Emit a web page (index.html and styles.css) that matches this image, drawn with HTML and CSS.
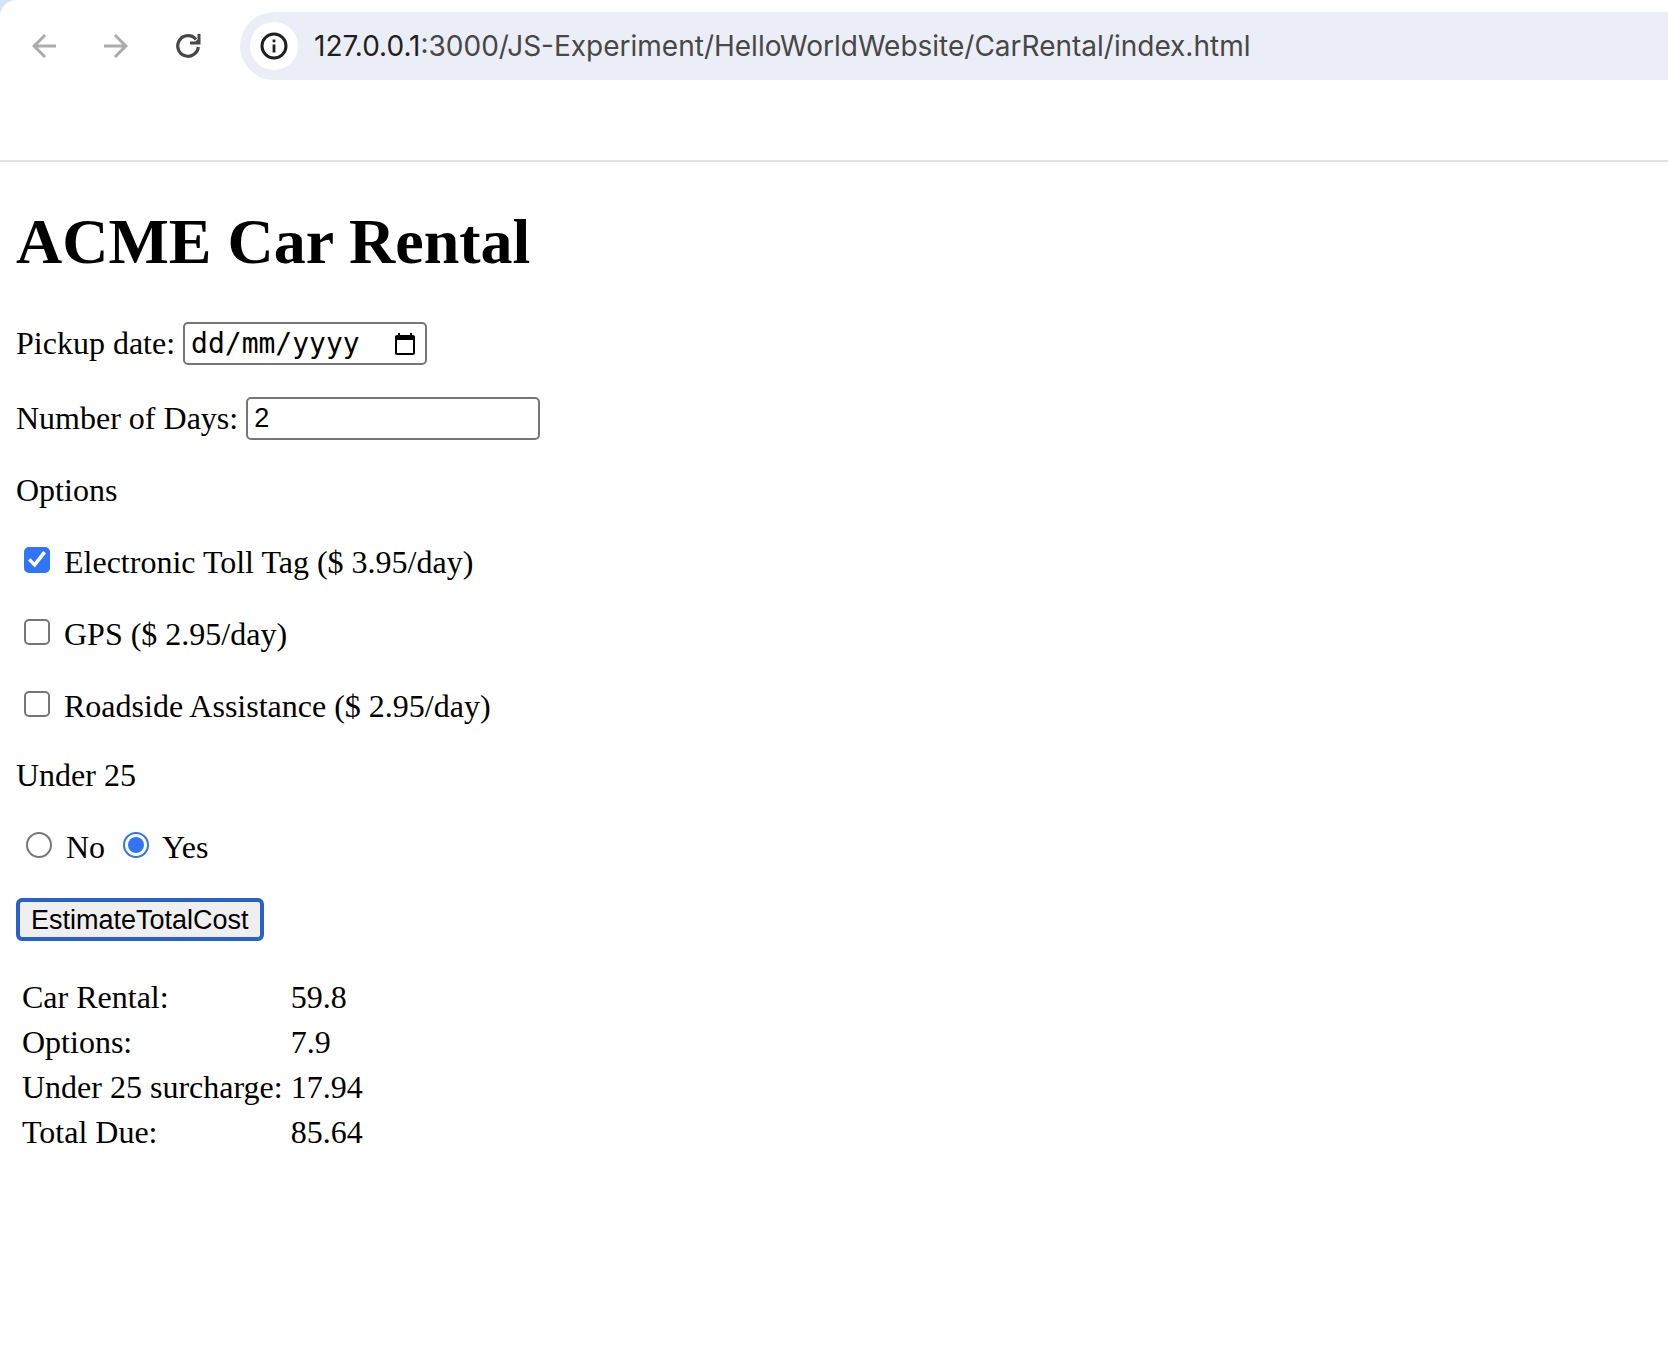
FILE: index.html
```html
<!DOCTYPE html>
<html lang="en-GB">
<head>
  <meta charset="utf-8">
  <title>ACME Car Rental</title>
  <link rel="stylesheet" href="styles.css">
</head>
<body>
  <header class="browser">
    <nav class="toolbar" aria-label="Browser">
      <button class="nav-button" type="button" aria-label="Back" disabled>
        <svg class="icon" viewBox="0 0 24 24"><path d="M20 11H7.83l5.59-5.59L12 4l-8 8 8 8 1.41-1.41L7.83 13H20z"/></svg>
      </button>
      <button class="nav-button" type="button" aria-label="Forward" disabled>
        <svg class="icon" viewBox="0 0 24 24"><path d="M4 11h12.17l-5.59-5.59L12 4l8 8-8 8-1.41-1.41L16.17 13H4z"/></svg>
      </button>
      <button class="nav-button" type="button" aria-label="Reload">
        <svg class="icon" viewBox="0 0 36 36"><path d="M28.3 19A10.3 10.3 0 1 1 26 11.4" fill="none" stroke="currentColor" stroke-width="3.2"/><path d="M27.500 6h3v10.500H20v-3h5.400l2.100-2.100z"/></svg>
      </button>
      <div class="address">
        <button class="site-info" type="button" aria-label="View site information">
          <svg class="info-icon" viewBox="0 0 28 28"><circle cx="14" cy="14" r="12" fill="none" stroke="currentColor" stroke-width="3"/><path d="M12.600 12.500h2.800v8h-2.800zM12.600 7.500h2.800v2.800h-2.800z"/></svg>
        </button>
        <div class="url" role="textbox" tabindex="0" aria-label="Address"><span class="host">127.0.0.1</span>:3000/JS-Experiment/HelloWorldWebsite/CarRental/index.html</div>
      </div>
    </nav>
  </header>

  <main class="page">
    <h1 class="title">ACME Car Rental</h1>
    <form>
      <div class="row field-row">
        <label for="pickup">Pickup date:</label>
        <div class="field date">
          <input class="date-input" id="pickup" type="text" placeholder="dd/mm/yyyy">
          <button class="picker" type="button" aria-label="Show date picker">
            <svg class="calendar" viewBox="0 0 24 24"><path d="M20 3h-1V1h-2v2H7V1H5v2H4c-1.100 0-2 .9-2 2v16c0 1.100.9 2 2 2h16c1.100 0 2-.9 2-2V5c0-1.100-.9-2-2-2zm0 18H4V8h16z"/></svg>
          </button>
        </div>
      </div>
      <div class="row field-row">
        <label for="days">Number of Days:</label>
        <input class="field days" id="days" type="text" value="2">
      </div>
      <p class="row">Options</p>
      <p class="row"><input class="tick" id="toll" type="checkbox" checked> <label for="toll">Electronic Toll Tag ($ 3.95/day)</label></p>
      <p class="row"><input class="tick" id="gps" type="checkbox"> <label for="gps">GPS ($ 2.95/day)</label></p>
      <p class="row"><input class="tick" id="roadside" type="checkbox"> <label for="roadside">Roadside Assistance ($ 2.95/day)</label></p>
      <p class="row">Under 25</p>
      <p class="row">
        <input class="radio" id="no" type="radio" name="under25"> <label for="no">No</label>
        <input class="radio" id="yes" type="radio" name="under25" checked> <label for="yes">Yes</label>
      </p>
      <p class="row"><button class="estimate" type="button">EstimateTotalCost</button></p>
    </form>
    <table class="costs">
      <tr><td>Car Rental:</td><td>59.8</td></tr>
      <tr><td>Options:</td><td>7.9</td></tr>
      <tr><td>Under 25 surcharge:</td><td>17.94</td></tr>
      <tr><td>Total Due:</td><td>85.64</td></tr>
    </table>
  </main>
</body>
</html>
```
FILE: styles.css
```css
* {
  box-sizing: border-box;
}

body {
  margin: 0;
  background: #fff;
  color: #000;
  font-family: "Liberation Serif", "Times New Roman", serif;
  font-size: 32px;
  line-height: 37px;
}

/* Browser chrome */
.browser {
  background: #d3e3fd;
}

.toolbar {
  display: flex;
  align-items: flex-start;
  height: 162px;
  padding: 12px 0 0 8px;
  border-bottom: 2px solid #e1e1e1;
  border-top-left-radius: 16px;
  background: #fff;
}

.nav-button {
  display: flex;
  flex: none;
  align-items: center;
  justify-content: center;
  width: 72px;
  height: 68px;
  padding: 0;
  border: 0;
  background: none;
  color: #474747;
}

.nav-button:disabled {
  color: #ababab;
}

.icon {
  width: 36px;
  height: 36px;
  fill: currentColor;
}

.address {
  display: flex;
  flex: 1;
  align-items: center;
  gap: 16px;
  min-width: 0;
  height: 68px;
  margin-left: 16px;
  padding-left: 10px;
  border-radius: 34px 0 0 34px;
  background: #ebeef7;
}

.site-info {
  display: flex;
  flex: none;
  align-items: center;
  justify-content: center;
  width: 48px;
  height: 48px;
  padding: 0;
  border: 0;
  border-radius: 50%;
  background: #fff;
  color: #1f1f1f;
}

.info-icon {
  width: 28px;
  height: 28px;
  fill: currentColor;
}

.url {
  overflow: hidden;
  color: #474747;
  font-family: Inter, sans-serif;
  font-size: 28px;
  white-space: nowrap;
}

.host {
  color: #1f1f1f;
}

/* Rental page */
.page {
  display: flow-root;
  padding: 0 16px 32px;
}

.title {
  margin: 43px 0;
  font-size: 64px;
  line-height: 74px;
}

.row {
  margin: 32px 0;
}

.field-row {
  display: flex;
  align-items: center;
  gap: 8px;
}

.field {
  height: 43px;
  border: 2px solid #767676;
  border-radius: 5px;
  background: #fff;
  color: #000;
}

.date {
  display: flex;
  align-items: center;
  justify-content: space-between;
  width: 244px;
  padding: 0 8px 0 6px;
}

.date-input {
  width: 184px;
  height: 36px;
  padding: 0;
  border: 0;
  background: none;
  color: #000;
  font-family: "DejaVu Sans Mono", monospace;
  font-size: 28px;
}

.date-input::placeholder {
  color: #000;
}

.picker {
  display: flex;
  padding: 0;
  border: 0;
  background: none;
}

.calendar {
  width: 24px;
  height: 24px;
}

.days {
  width: 294px;
  padding: 0 6px;
  font-family: "Liberation Sans", Arial, sans-serif;
  font-size: 27px;
}

.tick,
.radio {
  display: inline-grid;
  place-content: center;
  width: 26px;
  height: 26px;
  margin: 6px 6px 0 8px;
  border: 2px solid #767676;
  background: #fff;
  contain: layout;
  appearance: none;
}

.tick {
  border-radius: 5px;
}

.tick:checked {
  border-color: #3174f6;
  background: #3174f6;
}

.tick:checked::before {
  width: 18px;
  height: 18px;
  background: #fff;
  clip-path: polygon(0 53%, 14% 40%, 36% 62%, 84% 0, 100% 12%, 38% 92%);
  content: "";
}

.radio {
  margin-left: 10px;
  border-radius: 50%;
}

.radio:checked {
  border-color: #3174f6;
}

.radio:checked::before {
  width: 16px;
  height: 16px;
  border-radius: 50%;
  background: #3174f6;
  content: "";
}

.estimate {
  height: 43px;
  padding: 0 11px;
  border: 4px solid #2860cb;
  border-radius: 6px;
  background: #efefef;
  color: #000;
  font-family: "Liberation Sans", Arial, sans-serif;
  font-size: 27px;
  line-height: 32px;
  vertical-align: top;
}

.costs {
  border-spacing: 4px;
}

.costs td {
  padding: 2px;
}
```
